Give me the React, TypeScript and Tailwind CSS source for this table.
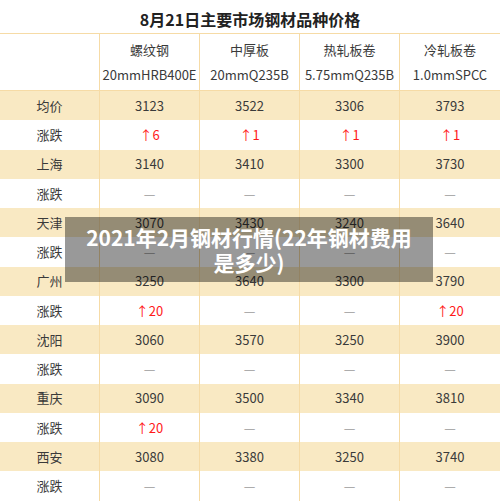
import React from "react";

type Row = { label: string; values: string[]; change?: boolean };

const rows: Row[] = [
  { label: "均价", values: ["3123", "3522", "3306", "3793"] },
  { label: "涨跌", values: ["↑6", "↑1", "↑1", "↑1"], change: true },
  { label: "上海", values: ["3140", "3410", "3300", "3730"] },
  { label: "涨跌", values: ["—", "—", "—", "—"], change: true },
  { label: "天津", values: ["3070", "3430", "3240", "3640"] },
  { label: "涨跌", values: ["—", "—", "—", "—"], change: true },
  { label: "广州", values: ["3250", "3640", "3300", "3790"] },
  { label: "涨跌", values: ["↑20", "—", "—", "↑20"], change: true },
  { label: "沈阳", values: ["3060", "3570", "3250", "3900"] },
  { label: "涨跌", values: ["—", "—", "—", "—"], change: true },
  { label: "重庆", values: ["3090", "3500", "3340", "3810"] },
  { label: "涨跌", values: ["↑20", "—", "—", "—"], change: true },
  { label: "西安", values: ["3080", "3380", "3250", "3740"] },
  { label: "涨跌", values: ["—", "—", "—", "—"], change: true },
];

const heads = [
  ["螺纹钢", "20mmHRB400E"],
  ["中厚板", "20mmQ235B"],
  ["热轧板卷", "5.75mmQ235B"],
  ["冷轧板卷", "1.0mmSPCC"],
];

export default function App() {
  return (
    <div
      className="relative h-[501px] w-[500px] overflow-hidden bg-white text-[#3a3a3a]"
      style={{ fontFamily: '"Noto Sans CJK SC", "Noto Sans", sans-serif' }}
    >
      <h1 className="flex h-[33px] items-center justify-center pt-[4px] text-[16px] font-bold text-[#222]">
        8月21日主要市场钢材品种价格
      </h1>

      <div className="border-t border-[#f6dba6]">
        <div className="grid h-[57px] grid-cols-5 border-b border-[#f6dba6] text-[13px]">
          <div className="border-r border-[#f6dba6]" />
          {heads.map(([name, spec], i) => (
            <div
              key={name}
              className={
                "flex flex-col items-center justify-center gap-[6px] " +
                (i < 3 ? "border-r border-[#f6dba6]" : "")
              }
            >
              <span className="leading-[19px]">{name}</span>
              <span className="leading-[19px]">{spec}</span>
            </div>
          ))}
        </div>

        {rows.map((row, r) => (
          <div
            key={r}
            className={
              "grid h-[29.25px] grid-cols-5 text-[13px] " +
              (row.change ? "bg-white" : "bg-[#f9e9c3]")
            }
          >
            <div className="flex items-center justify-center border-r border-[#f6dba6]">
              {row.label}
            </div>
            {row.values.map((v, i) => (
              <div
                key={i}
                className={
                  "flex items-center justify-center " +
                  (i < 3 ? "border-r border-[#f6dba6] " : "") +
                  (v.startsWith("↑") ? "text-[#ff1a1a]" : v === "—" ? "text-[#999]" : "")
                }
              >
                {v}
              </div>
            ))}
          </div>
        ))}
      </div>

      <div className="absolute left-[65px] top-[217px] flex h-[65px] w-[368px] items-center justify-center bg-black/40 px-2">
        <p className="text-center text-[21px] font-bold leading-[25px] text-white">
          2021年2月钢材行情(22年钢材费用
          <br />
          是多少)
        </p>
      </div>
    </div>
  );
}
